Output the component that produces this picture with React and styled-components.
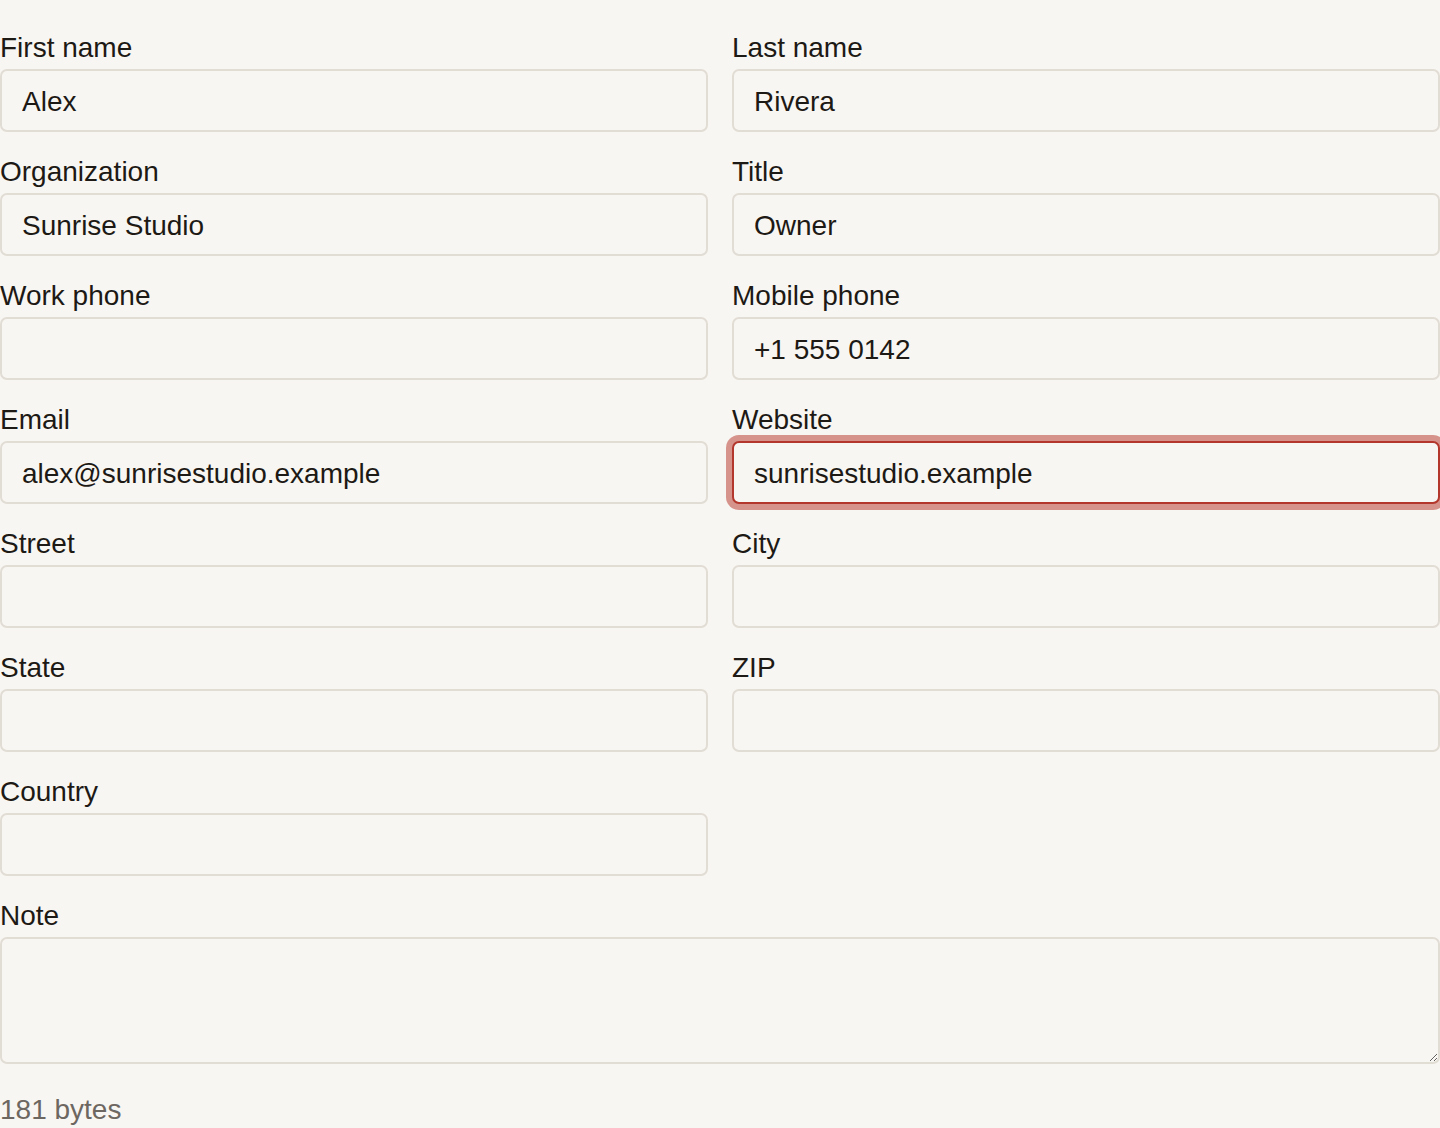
import styled, { createGlobalStyle } from "styled-components";

const GlobalStyle = createGlobalStyle`
  html, body {
    margin: 0;
    padding: 0;
    background: #f8f6f2;
    overflow: hidden;
  }
  body {
    font-family: "Liberation Sans", Arial, sans-serif;
    color: #1d1915;
  }
  * { box-sizing: border-box; }
`;

const fields = [
  { label: "First name", value: "Alex" },
  { label: "Last name", value: "Rivera" },
  { label: "Organization", value: "Sunrise Studio" },
  { label: "Title", value: "Owner" },
  { label: "Work phone", value: "" },
  { label: "Mobile phone", value: "+1 555 0142" },
  { label: "Email", value: "alex@sunrisestudio.example" },
  { label: "Website", value: "sunrisestudio.example", focused: true },
  { label: "Street", value: "" },
  { label: "City", value: "" },
  { label: "State", value: "" },
  { label: "ZIP", value: "" },
  { label: "Country", value: "" },
];

const App = () => {
  return (
    <>
      <GlobalStyle />
      <Form>
        {/* two-column field grid */}
        <Grid>
          {fields.map((f) => (
            <Field key={f.label}>
              <Label>{f.label}</Label>
              <Input defaultValue={f.value} $focused={f.focused} />
            </Field>
          ))}
          <Field $wide>
            <Label>Note</Label>
            <Note />
          </Field>
        </Grid>
        <Bytes>181 bytes</Bytes>
      </Form>
    </>
  );
};

const Form = styled.form`
  padding-top: 32px;
  width: 1440px;
`;

const Grid = styled.div`
  display: grid;
  grid-template-columns: 708px 708px;
  column-gap: 24px;
  row-gap: 24px;
`;

const Field = styled.div`
  display: flex;
  flex-direction: column;
  gap: 5px;
  grid-column: ${({ $wide }) => ($wide ? "1 / -1" : "auto")};
`;

const Label = styled.label`
  font-size: 28px;
  line-height: 32px;
  color: #1d1915;
`;

const Input = styled.input`
  display: block;
  width: 100%;
  height: 63px;
  padding: 15px 20px 12px;
  font-family: inherit;
  font-size: 28px;
  line-height: 32px;
  color: #1d1915;
  background: #f8f6f2;
  border: 2px solid ${({ $focused }) => ($focused ? "#b3372c" : "#e1dcd4")};
  border-radius: 7px;
  outline: none;
  box-shadow: ${({ $focused }) => ($focused ? "0 0 0 6px #d6938b" : "none")};
`;

const Note = styled.textarea`
  display: block;
  width: 100%;
  height: 127px;
  padding: 15px 20px 12px;
  font-family: inherit;
  font-size: 28px;
  line-height: 32px;
  background: #f8f6f2;
  border: 2px solid #e1dcd4;
  border-radius: 7px;
  outline: none;
  resize: vertical;
`;

const Bytes = styled.p`
  margin: 30px 0 0;
  font-size: 28px;
  line-height: 32px;
  color: #6d6761;
`;

export default App;
